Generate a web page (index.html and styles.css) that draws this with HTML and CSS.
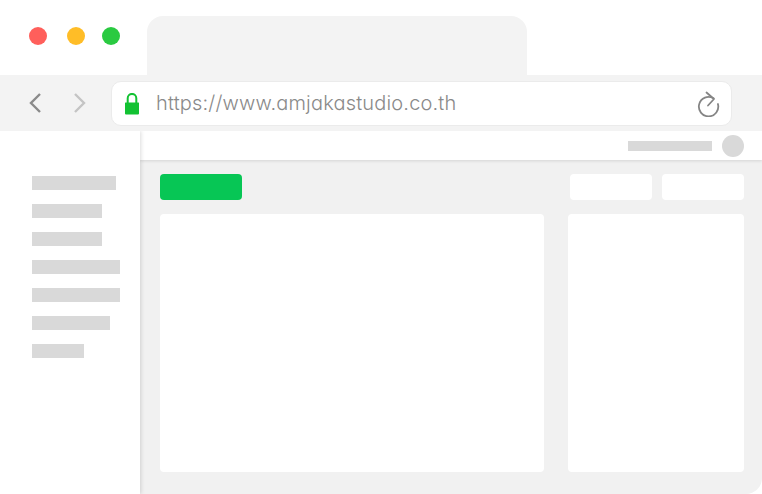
FILE: index.html
```html
<!DOCTYPE html>
<html lang="en">
<head>
<meta charset="utf-8">
<title>Browser mockup</title>
<link rel="stylesheet" href="styles.css">
</head>
<body>
<div class="window">
  <div class="tabstrip">
    <div class="lights">
      <span class="light red"></span>
      <span class="light yellow"></span>
      <span class="light green"></span>
    </div>
    <div class="tab"></div>
  </div>
  <div class="toolbar">
    <svg class="nav nav-back" width="14" height="22" viewBox="0 0 14 22"><path d="M12 2 3 11l9 9" fill="none" stroke="#8a8a8a" stroke-width="2.4"/></svg>
    <svg class="nav nav-forward" width="14" height="22" viewBox="0 0 14 22"><path d="M2 2l9 9-9 9" fill="none" stroke="#c4c4c4" stroke-width="2.4"/></svg>
    <div class="address">
      <svg class="lock" width="16" height="22" viewBox="0 0 16 22"><path d="M3.700 10V5.200a4.300 4.300 0 0 1 8.600 0V10" fill="none" stroke="#12c232" stroke-width="2"/><path d="M1.500 9.500h13a.5.5 0 0 1 .5.5v10.500a1 1 0 0 1-1 1H2a1 1 0 0 1-1-1V10a.5.5 0 0 1 .5-.5z" fill="#12c232"/></svg>
      <span class="url">https://www.amjakastudio.co.th</span>
      <svg class="reload" width="24" height="26" viewBox="0 0 24 26"><path d="M17.500 7.300A9.700 9.700 0 1 0 21.900 13" fill="none" stroke="#858585" stroke-width="1.800" stroke-linecap="round"/><path d="M10.500 1.500 18 8l-6 6.500" fill="none" stroke="#858585" stroke-width="1.800" stroke-linecap="round" stroke-linejoin="round"/></svg>
    </div>
  </div>
  <div class="app">
    <aside class="sidebar">
      <div class="bar w84"></div>
      <div class="bar w70"></div>
      <div class="bar w70"></div>
      <div class="bar w88"></div>
      <div class="bar w88"></div>
      <div class="bar w78"></div>
      <div class="bar w52"></div>
    </aside>
    <main class="main">
      <header class="header">
        <div class="user-name"></div>
        <div class="avatar"></div>
      </header>
      <div class="content">
        <div class="actions">
          <div class="btn btn-primary"></div>
          <div class="btn-group">
            <div class="btn"></div>
            <div class="btn"></div>
          </div>
        </div>
        <div class="panels">
          <div class="card card-main"></div>
          <div class="card card-side"></div>
        </div>
      </div>
    </main>
  </div>
</div>
</body>
</html>
```
FILE: styles.css
```css
* { box-sizing: border-box; }
html, body { margin: 0; padding: 0; background: #fff; }
body { width: 762px; height: 494px; overflow: hidden; }
.window { width: 762px; height: 494px; display: flex; flex-direction: column; }

.tabstrip { height: 75px; flex: none; display: flex; align-items: flex-start; padding: 27px 0 0 29px; }
.lights { display: flex; }
.light { width: 18px; height: 18px; border-radius: 50%; }
.red { background: #ff5f5b; }
.yellow { background: #ffbd27; margin-left: 20px; }
.green { background: #2aca41; margin-left: 17px; }
.tab { width: 380px; height: 59px; margin: -11px 0 0 27px; background: #f3f3f3; border-radius: 16px 16px 0 0; }

.toolbar { height: 56px; flex: none; background: #f3f3f3; display: flex; align-items: center; padding: 0 30px 0 28px; }
.nav { flex: none; }
.nav-forward { margin-left: 31px; }
.address { flex: 1; height: 45px; margin-left: 24px; background: #fff; border: 1px solid #ebebeb; border-radius: 10px; display: flex; align-items: center; padding: 0 11px 0 12px; }
.lock { flex: none; margin-top: 1px; }
.url { flex: 1; margin-left: 16px; font-family: "Inter", sans-serif; font-feature-settings: "cv11"; font-weight: 300; font-size: 20px; letter-spacing: 0.17px; color: #8a8a8a; }
.reload { flex: none; margin-top: 2px; }

.app { flex: 1; display: flex; min-height: 0; overflow: hidden; }
.sidebar { position: relative; z-index: 1; width: 140px; flex: none; padding: 45px 0 0 32px; display: flex; flex-direction: column; gap: 14px; background: #fff; box-shadow: 1px 0 4px rgba(0,0,0,.14); }
.bar { height: 14px; background: #d9d9d9; }
.w84 { width: 84px; }
.w70 { width: 70px; }
.w88 { width: 88px; }
.w78 { width: 78px; }
.w52 { width: 52px; }

.main { flex: 1; display: flex; flex-direction: column; background: #f1f1f1; border-bottom-right-radius: 16px; }
.header { height: 29px; flex: none; background: #fff; display: flex; align-items: center; justify-content: flex-end; padding-right: 18px; box-shadow: 0 1px 3px rgba(0,0,0,.12); }
.user-name { width: 84px; height: 10px; background: #d9d9d9; }
.avatar { width: 22px; height: 22px; margin-left: 10px; border-radius: 50%; background: #d9d9d9; }

.content { flex: 1; padding: 14px 18px 22px 20px; display: flex; flex-direction: column; gap: 14px; min-height: 0; }
.actions { display: flex; justify-content: space-between; flex: none; }
.btn { width: 82px; height: 26px; border-radius: 4px; background: #fff; }
.btn-primary { background: #07c655; }
.btn-group { display: flex; gap: 10px; }
.panels { flex: 1; display: flex; justify-content: space-between; min-height: 0; }
.card { background: #fff; border-radius: 4px; }
.card-main { width: 384px; }
.card-side { width: 176px; }
```
